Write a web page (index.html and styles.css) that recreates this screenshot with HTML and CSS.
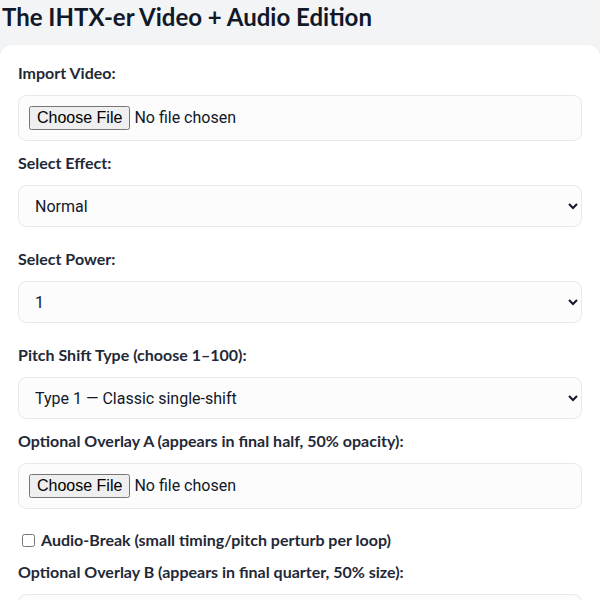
FILE: index.html
```html
<!DOCTYPE html>
<html lang="en">

<head>
  <meta charset="UTF-8">
  <meta name="viewport" content="width=device-width, initial-scale=1.0">
  <title>The IHTX-er Video + Audio Edition</title>
  <link rel="stylesheet" href="styles.css">
</head>

<body>
  <!-- page title -->
  <h1 class="page-title">The IHTX-er Video + Audio Edition</h1>

  <!-- main form card -->
  <div class="card">
    <div class="field">
      <label class="field-label" for="video">Import Video:</label>
      <input class="file-box" type="file" id="video" accept="video/*">
    </div>

    <div class="field field-spaced">
      <label class="field-label" for="effect">Select Effect:</label>
      <select class="select-box" id="effect">
        <option>Normal</option>
        <option>Reverse</option>
        <option>Mirror</option>
      </select>
    </div>

    <div class="field field-spaced">
      <label class="field-label" for="power">Select Power:</label>
      <select class="select-box" id="power">
        <option>1</option>
        <option>2</option>
        <option>3</option>
      </select>
    </div>

    <div class="field">
      <label class="field-label" for="pitch">Pitch Shift Type (choose 1–100):</label>
      <select class="select-box" id="pitch">
        <option>Type 1 — Classic single-shift</option>
        <option>Type 2 — Double-shift</option>
      </select>
    </div>

    <div class="field">
      <label class="field-label" for="overlayA">Optional Overlay A (appears in final half, 50% opacity):</label>
      <input class="file-box" type="file" id="overlayA">
    </div>

    <!-- checkbox row -->
    <label class="check-row">
      <input type="checkbox" id="audioBreak">
      <span>Audio-Break (small timing/pitch perturb per loop)</span>
    </label>

    <div class="field">
      <label class="field-label" for="overlayB">Optional Overlay B (appears in final quarter, 50% size):</label>
      <input class="file-box" type="file" id="overlayB">
    </div>
  </div>
</body>

</html>
```

FILE: styles.css
```css
/* reset */
* {
  box-sizing: border-box;
}

body {
  margin: 0;
  background: #f3f4f6;
  color: #111827;
  font-family: Lato, "Noto Sans", sans-serif;
}

/* title */
.page-title {
  margin: 0;
  padding: 2px 0 0 2px;
  font-size: 24px;
  line-height: 30px;
  font-weight: 700;
  color: #111827;
  height: 45px;
}

/* white card */
.card {
  background: #FFFFFF;
  border-radius: 12px;
  box-shadow: 0 1px 3px rgba(0, 0, 0, 0.06);
  padding: 18px 18px 20px;
}

.field {
  margin-bottom: 12px;
}

.field-spaced {
  margin-bottom: 22px;
}

.field-label {
  display: block;
  font-size: 16px;
  font-weight: 700;
  line-height: 20px;
  margin-bottom: 12px;
  color: #1f2937;
}

/* inputs */
.file-box,
.select-box {
  display: block;
  width: 100%;
  font-family: Roboto, "Liberation Sans", sans-serif;
  font-size: 16px;
  color: #111827;
  background: #fcfcfd;
  border: 1px solid #e7e9ec;
  border-radius: 8px;
}

.file-box {
  padding: 10px;
  height: 46px;
}

.select-box {
  padding: 0 12px;
  height: 42px;
}

/* checkbox row */
.check-row {
  display: flex;
  align-items: center;
  margin: 21px 0 12px;
  font-size: 16px;
  font-weight: 700;
  line-height: 20px;
  color: #1f2937;
}

.check-row input {
  width: 13px;
  height: 13px;
  margin: 0 6px 0 4px;
}
```
